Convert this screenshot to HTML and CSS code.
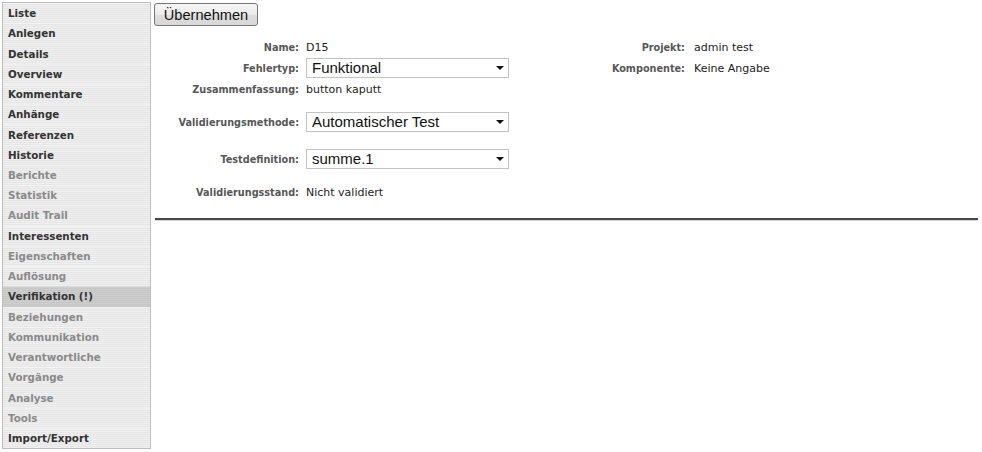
FILE: index.html
```html
<!DOCTYPE html>
<html lang="de">
<head>
<meta charset="utf-8">
<title>Verifikation</title>
<link rel="stylesheet" href="styles.css">
</head>
<body>
<div class="page">
  <nav class="sidebar">
    <a class="item dark">Liste</a>
    <a class="item dark">Anlegen</a>
    <a class="item dark">Details</a>
    <a class="item dark">Overview</a>
    <a class="item dark">Kommentare</a>
    <a class="item dark">Anhänge</a>
    <a class="item dark">Referenzen</a>
    <a class="item dark">Historie</a>
    <a class="item muted">Berichte</a>
    <a class="item muted">Statistik</a>
    <a class="item muted">Audit Trail</a>
    <a class="item dark">Interessenten</a>
    <a class="item muted">Eigenschaften</a>
    <a class="item muted">Auflösung</a>
    <a class="item dark active">Verifikation (!)</a>
    <a class="item muted">Beziehungen</a>
    <a class="item muted">Kommunikation</a>
    <a class="item muted">Verantwortliche</a>
    <a class="item muted">Vorgänge</a>
    <a class="item muted">Analyse</a>
    <a class="item muted">Tools</a>
    <a class="item dark">Import/Export</a>
  </nav>
  <main class="main">
    <button class="apply" type="button">Übernehmen</button>
    <div class="form">
      <div class="lbl r1">Name:</div>
      <div class="val r1">D15</div>
      <div class="lbl2 r1">Projekt:</div>
      <div class="val2 r1">admin test</div>

      <div class="lbl r2">Fehlertyp:</div>
      <div class="val r2"><span class="sel"><select><option>Funktional</option></select><i class="arrow"></i></span></div>
      <div class="lbl2 r2">Komponente:</div>
      <div class="val2 r2">Keine Angabe</div>

      <div class="lbl r3">Zusammenfassung:</div>
      <div class="val r3">button kaputt</div>

      <div class="lbl r4">Validierungsmethode:</div>
      <div class="val r4"><span class="sel"><select><option>Automatischer Test</option></select><i class="arrow"></i></span></div>

      <div class="lbl r5">Testdefinition:</div>
      <div class="val r5"><span class="sel"><select><option>summe.1</option></select><i class="arrow"></i></span></div>

      <div class="lbl r6">Validierungsstand:</div>
      <div class="val r6">Nicht validiert</div>
    </div>
    <div class="rule"></div>
  </main>
</div>
</body>
</html>
```

FILE: styles.css
```css
* { box-sizing: border-box; }
html, body { margin: 0; padding: 0; background: #fff; }
body { font-family: "DejaVu Sans", Verdana, sans-serif; color: #222; }

.page {
  display: flex;
  align-items: flex-start;
  width: 982px;
  height: 452px;
}

.sidebar {
  width: 149px;
  height: 447px;
  margin: 2px 0 0 2px;
  border: 1px solid #bdbdbd;
  display: flex;
  flex-direction: column;
  background: repeating-linear-gradient(to bottom, #efefef 0, #efefef 1px, #e6e6e6 1px, #e6e6e6 2px);
}
.item {
  flex: 1 1 0;
  display: flex;
  align-items: center;
  padding-left: 5px;
  padding-bottom: 1px;
  font-weight: bold;
  font-size: 10.3px;
  text-decoration: none;
  border-top: 1px solid rgba(255,255,255,0.35);
}
.item.dark { color: #333; }
.item.muted { color: #8a8a8a; }
.item.active {
  background: repeating-linear-gradient(to bottom, #cdcdcd 0, #cdcdcd 1px, #c6c6c6 1px, #c6c6c6 2px);
  color: #333;
}

.main {
  flex: 1;
  margin-left: 3px;
  padding-right: 4px;
  padding-top: 3px;
}

.apply {
  display: block;
  width: 104px;
  height: 23px;
  padding: 0;
  font-family: "Liberation Sans", Arial, sans-serif;
  font-size: 14.6px;
  color: #111;
  border: 1px solid #767676;
  border-radius: 3px;
  background: linear-gradient(to bottom, #f6f6f6 0%, #ebebeb 50%, #dcdcdc 51%, #d9d9d9 100%);
}

.form {
  margin-top: 11px;
  margin-left: 1px;
  display: grid;
  grid-template-columns: 144px 210px 176px auto;
  grid-template-rows: 21px 21px 21px 33px 37px 33px;
  align-items: center;
}
.lbl, .lbl2 {
  text-align: right;
  font-weight: bold;
  font-size: 9.7px;
  color: #575757;
}
.lbl { grid-column: 1; }
.val { grid-column: 2; padding-left: 7px; font-size: 11px; color: #222; }
.lbl2 { grid-column: 3; }
.val2 { grid-column: 4; padding-left: 9px; font-size: 11px; color: #222; }

.r1 { grid-row: 1; }
.r2 { grid-row: 2; }
.r3 { grid-row: 3; }
.r4 { grid-row: 4; align-self: end; }
.r5 { grid-row: 5; align-self: end; }
.r6 { grid-row: 6; align-self: end; }
.r4.lbl, .r4.val, .r5.lbl, .r5.val, .r6.lbl, .r6.val { height: 21px; display: flex; align-items: center; }
.r4.lbl, .r5.lbl, .r6.lbl { justify-content: flex-end; }

.sel {
  position: relative;
  display: block;
  width: 203px;
  height: 20px;
  margin-top: -1px;
}
.sel select {
  -webkit-appearance: none;
  appearance: none;
  width: 203px;
  height: 20px;
  margin: 0;
  padding: 0 0 0 5px;
  border: 1px solid #c2c2c2;
  border-radius: 0;
  background: #fff;
  font-family: "Liberation Sans", Arial, sans-serif;
  font-size: 15px;
  color: #111;
  line-height: 18px;
}
.arrow {
  position: absolute;
  right: 5px;
  top: 8px;
  width: 0;
  height: 0;
  border-left: 4px solid transparent;
  border-right: 4px solid transparent;
  border-top: 4px solid #111;
}

.rule {
  margin-top: 15px;
  margin-left: 1px;
  height: 3px;
  border-top: 2px solid #474747;
  border-bottom: 1px solid #d6d6d6;
}
```
